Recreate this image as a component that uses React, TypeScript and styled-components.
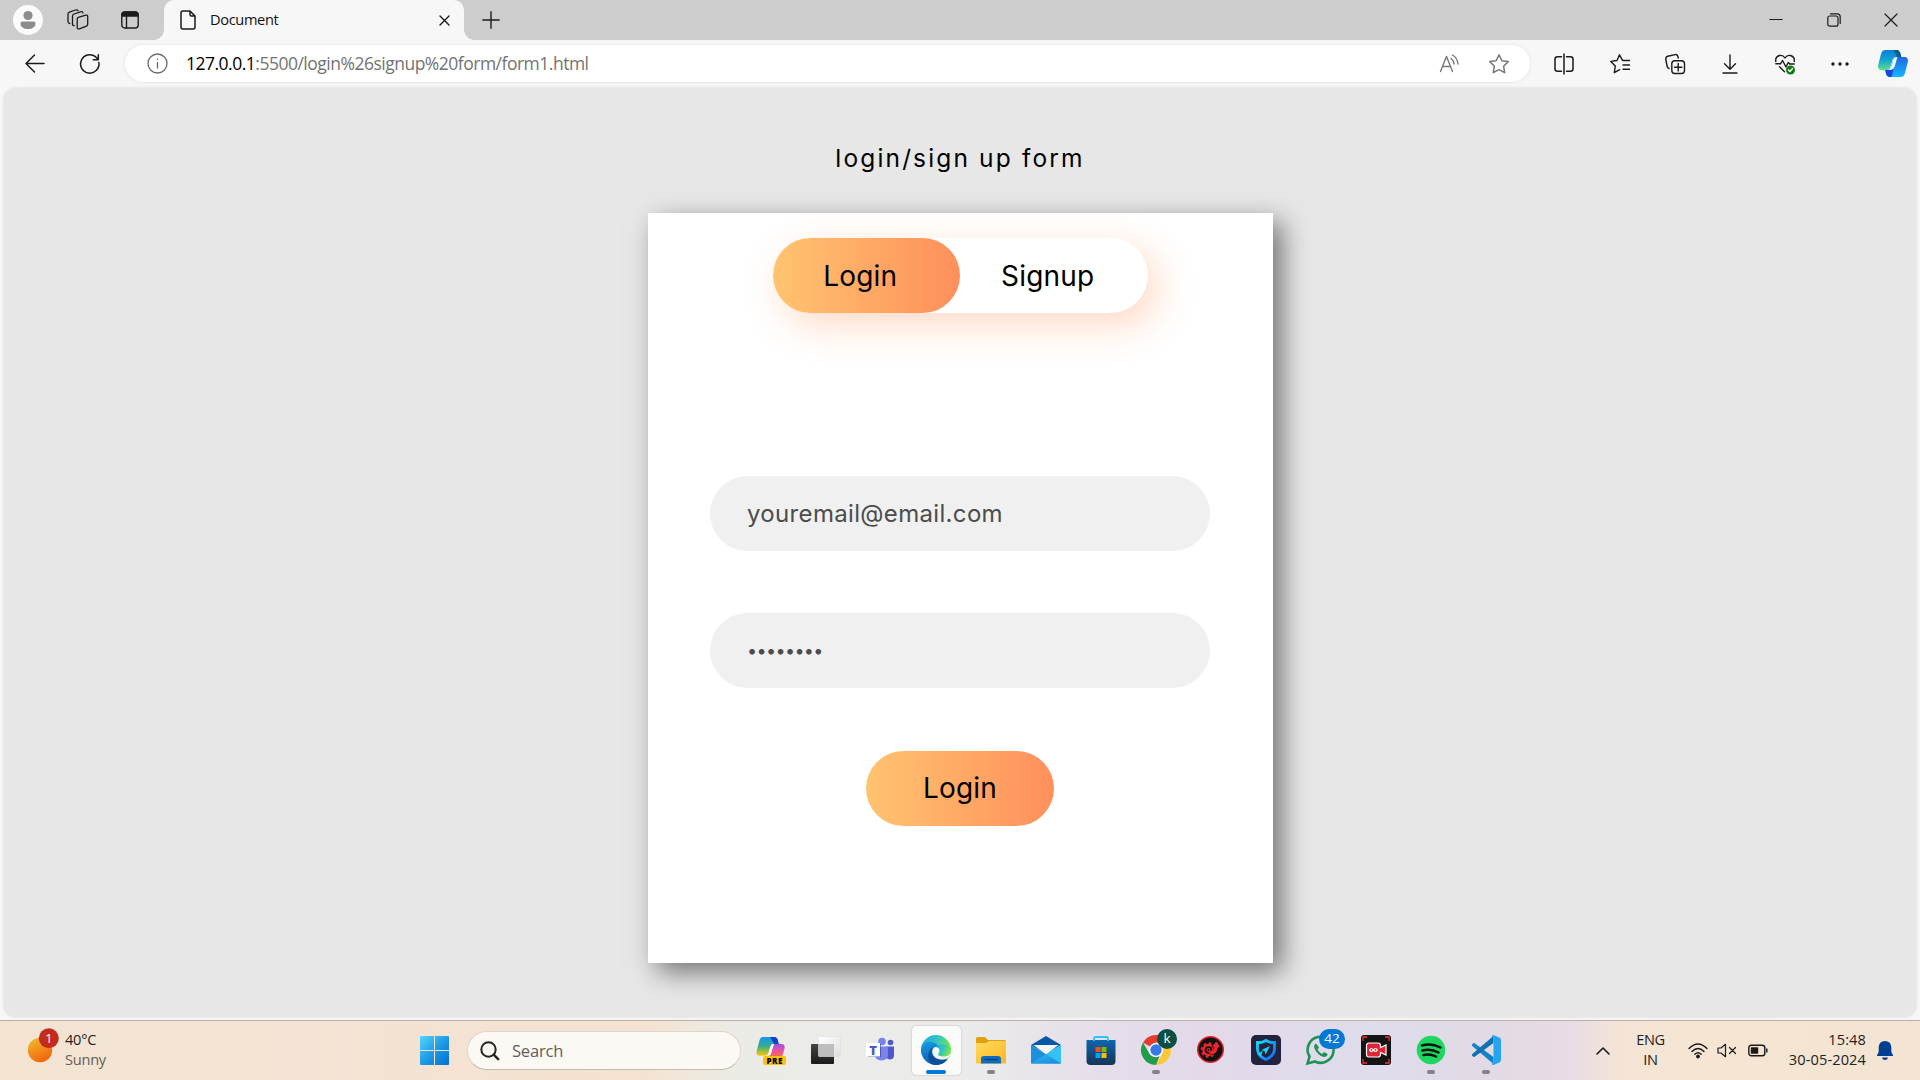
import React from 'react';
import styled, { createGlobalStyle } from 'styled-components';

const Global = createGlobalStyle`
  *, *::before, *::after { box-sizing: border-box; }
  html, body { margin: 0; padding: 0; background: #f7f7f7; }
  body { width: 1920px; height: 1080px; overflow: hidden; }
  button, input { font: inherit; border: 0; background: none; padding: 0; margin: 0; color: inherit; outline: none; }
`;

const ui = `'Open Sans', 'Noto Sans', sans-serif`;
const geo = `Inter, 'Open Sans', sans-serif`;

const Screen = styled.div`
  width: 1920px; height: 1080px; display: flex; flex-direction: column;
  background: #f7f7f7; font-family: ${ui}; color: #111; overflow: hidden;
`;
const TabStrip = styled.header`
  height: 40px; flex: none; display: flex; align-items: stretch; background: #cdcdcd;
`;
const Cell = styled.button<{ $w: number }>`
  width: ${p => p.$w}px; flex: none; display: flex; align-items: center; justify-content: center;
`;
const Spacer = styled.div`flex: 1;`;
const Avatar = styled.span`
  width: 30px; height: 30px; border-radius: 50%; background: #fbfbfb;
  display: flex; align-items: center; justify-content: center;
`;
const Tab = styled.div`
  position: relative; width: 300px; margin-left: 4px; background: #f7f7f7; border-radius: 10px 10px 0 0;
  display: flex; align-items: center; padding: 0 10px 0 16px;
  &::before, &::after { content: ''; position: absolute; bottom: 0; width: 10px; height: 10px; }
  &::before { left: -10px; background: radial-gradient(circle at 0 0, transparent 9.5px, #f7f7f7 10px); }
  &::after { right: -10px; background: radial-gradient(circle at 100% 0, transparent 9.5px, #f7f7f7 10px); }
`;
const TabTitle = styled.span`
  flex: 1; padding: 0 0 2px 14px; font-size: 14.6px; letter-spacing: -0.35px; line-height: 20px; color: #111;
`;
const Toolbar = styled.nav`
  height: 47.5px; flex: none; display: flex; align-items: center; padding-left: 8px;
`;
const Address = styled.div`
  width: 1405px; height: 37px; margin: 0 6px 0 7px; border-radius: 19px; background: #fff;
  box-shadow: 0 0 4px rgba(0,0,0,.09); display: flex; align-items: center; padding: 0 6px 0 22px;
`;
const Url = styled.span`
  flex: 1; padding: 0 0 1px 18px; font-size: 17.5px; letter-spacing: -0.5px; color: #737373; white-space: nowrap;
  b { font-weight: 400; color: #000; }
`;
const Viewport = styled.main`
  height: 929.5px; flex: none; margin: 0 4px 3px; border-radius: 12px; background: #e7e7e7;
  box-shadow: 0 0 3px rgba(0,0,0,.14); display: flex; flex-direction: column; align-items: center;
  font-family: ${geo}; color: #000;
`;
const Heading = styled.h1`
  margin: 0; height: 125.5px; padding-top: 52.5px; font-size: 24.5px; line-height: 36px; font-weight: 400;
  letter-spacing: 2.15px;
`;
const Card = styled.section`
  width: 625px; height: 750px; background: #fff; box-shadow: 9px 9px 25px rgba(0,0,0,.5);
  display: flex; flex-direction: column; align-items: center; padding-top: 25px;
`;
const Toggle = styled.div`
  width: 375px; height: 75px; border-radius: 37.5px; display: flex; background: #fff;
  box-shadow: 10px 12px 38px rgba(255, 130, 60, .3);
`;
const Pill = styled.button<{ $active?: boolean; $shift?: number }>`
  width: 187.5px; height: 75px; border-radius: 37.5px; font-size: 28px; letter-spacing: 0.2px;
  padding-right: ${p => p.$shift ?? 0}px; text-align: center;
  background: ${p => (p.$active ? 'linear-gradient(to right, #ffc46f, #ff8f5c)' : 'transparent')};
`;
const Form = styled.form`
  margin-top: 163px; display: flex; flex-direction: column; align-items: center; gap: 62.3px;
`;
const Field = styled.input<{ $dots?: boolean }>`
  width: 500px; height: 75px; border-radius: 37.5px; background: #f0f0f0; color: #4c4c4c;
  padding: 0 37px 1px; font-size: ${p => (p.$dots ? 18 : 24)}px; letter-spacing: ${p => (p.$dots ? -0.65 : 0.33)}px;
`;
const Taskbar = styled.footer`
  height: 60px; flex: none; display: flex; align-items: stretch; border-top: 1px solid #b9afa8;
  background: linear-gradient(90deg, #f3e4d2 0, #f3e3d4 300px, #f5e2d0 640px, #f0e7da 685px, #ebebe6 740px,
    #ebecea 960px, #e6e0ea 1080px, #e3d9e9 1200px, #dfdcec 1370px, #e2dae4 1500px, #e8dce6 1570px, #f4e4d6 1620px, #f5e5d2 1700px, #f3e4d3 1920px);
`;
const Weather = styled.div`
  width: 406.5px; display: flex; align-items: center; padding-left: 26px; gap: 3px;
`;
const Lines = styled.div<{ $align: string; $w: number; $track?: number }>`
  width: ${p => p.$w}px; display: flex; flex-direction: column; text-align: ${p => p.$align};
  font-size: 14.6px; line-height: 20px; letter-spacing: ${p => p.$track ?? -0.35}px; color: #222; white-space: nowrap;
  padding-bottom: 3px;
`;
const Muted = styled.span`color: #65605a;`;
const Search = styled.div`
  width: 274.5px; height: 39px; margin: 10px 2.5px 0 5px; border-radius: 20px; background: #fcf8f3;
  border: 1px solid #e0d5ca; border-bottom-color: #c3bbb4; display: flex; align-items: center; padding-left: 12.5px; gap: 12px;
  font-size: 16.5px; letter-spacing: -0.2px; color: #5f5e5c;
`;
const App55 = styled.button<{ $open?: boolean }>`
  position: relative; width: 55px; flex: none; display: flex; align-items: center; justify-content: center; padding-bottom: 1px;
  &::after {
    content: ''; display: ${p => (p.$open ? 'block' : 'none')}; position: absolute; bottom: 6px; left: 50%;
    width: 8px; height: 4px; margin-left: -4px; border-radius: 2px; background: #858085;
  }
`;
const ActiveTile = styled(App55)`
  width: 49px; margin: 5px 3px; border-radius: 5px; background: rgba(255,255,255,.72); box-shadow: 0 0 1px 0.5px rgba(0,0,0,.08);
  &::after { display: block; width: 20px; margin-left: -10px; bottom: 1px; background: #0078d4; }
`;
const Badge = styled.span<{ $bg: string; $w: number; $x: number }>`
  position: absolute; top: 8px; left: ${p => p.$x}px; min-width: ${p => p.$w}px; height: 20px; border-radius: 10px;
  background: ${p => p.$bg}; color: #fff; font-size: 13.5px; line-height: 19px; text-align: center;
`;
const Tray = styled.div`display: flex; align-items: center; margin-left: auto; padding-right: 16px;`;
const Svg = styled.svg`display: block; flex: none; overflow: visible;`;
const WeatherArt = styled.div`position: relative; width: 36px; height: 40px;`;

type IconProps = { w?: number; h?: number; color?: string; sw?: number; children: React.ReactNode };
const Line = ({ w = 22, h, color = '#1b1b1b', sw = 1.4, children }: IconProps) => (
  <Svg width={w} height={h ?? w} viewBox={`0 0 ${w} ${h ?? w}`} fill="none" stroke={color} strokeWidth={sw}
    strokeLinecap="round" strokeLinejoin="round">{children}</Svg>
);
const Art = ({ children }: { children: React.ReactNode }) => (
  <Svg width={30} height={30} viewBox="0 0 30 30">{children}</Svg>
);
const Grad = ({ id, a, b, c, x2 = '1', y2 = '1' }: { id: string; a: string; b: string; c?: string; x2?: string; y2?: string }) => (
  <linearGradient id={id} x1="0" y1="0" x2={x2} y2={y2}>
    <stop offset="0" stopColor={a} />{c && <stop offset=".5" stopColor={c} />}<stop offset="1" stopColor={b} />
  </linearGradient>
);

const CopilotTop = () => (
  <Svg width={30} height={27} viewBox="0 0 30 27">
    <defs>
      <Grad id="ct1" a="#0a7fe0" c="#12a5cf" b="#62df8e" x2="0" />
      <Grad id="ct2" a="#2266e0" b="#14b8ff" x2="0" />
    </defs>
    <path d="M7.5 0H18c2.5 0 3.6 1.3 4.3 3.6L23 7h-4c-3 0-4 1.5-4.8 4l-1.8 6c-.8 2.5-2 3.2-4.4 3.2H3.6C.6 20.200-.4 17.600.2 15L3 4C3.800 1.300 5 0 7.500 0Z" fill="url(#ct1)" />
    <path d="M15 0h4c2.300.1 3 1.800 3.700 4l.8 4h-4.500c-1.300-3-1.500-6-4-8Z" fill="#0d5f8f" />
    <path d="M22.500 27H12c-2.500 0-3.400-1.500-4-3.500L7.200 20c3 0 5-.6 6-3.600l2-6C16 8 17.500 7 20 7h6.400c3 0 4 2.300 3.400 5l-2.800 11c-.8 2.700-2 4-4.500 4Z" fill="url(#ct2)" />
    <path d="M7.200 20c3.300 0 5-.4 6-3.600L15 11c0 5 1 9-1.500 16H12c-2.500 0-3.400-1.500-4-3.500Z" fill="#1747dc" />
    <path d="m13.200 16.400 2-6C16 8 17.500 7 19.500 7l-2 6.500C16.400 18.500 14.500 20 11 20H7.200c3 0 5-.6 6-3.600Z" fill="#f4fbff" />
  </Svg>
);

export default function App() {
  return (
    <Screen>
      <Global />
      <TabStrip>
        <Cell $w={56}>
          <Avatar>
            <Svg width={16} height={20} viewBox="0 0 16 20" fill="#8c8c8c">
              <circle cx="8" cy="5.500" r="4.600" />
              <path d="M2.500 11.500h11a2 2 0 0 1 2 2c0 3.600-3.300 5.500-7.500 5.500S.5 17.100.5 13.500a2 2 0 0 1 2-2Z" />
            </Svg>
          </Avatar>
        </Cell>
        <Cell $w={43}>
          <Line w={22} sw={1.300}>
            <path d="m11.300 8.300 7.500-2.200q1.900-.4 1.900 1.500v7.600q0 1.300-1.300 1.900l-6.900 2.700q-2.300.7-2.300-1.500v-8q0-1.500 1.100-2Z" />
            <path d="M7.200 16.700q-1.700 0-1.700-1.700V7.200q0-1.600 1.500-2.200l6.500-2.200q2-.6 2.400 1" />
            <path d="M2.800 14.500Q1 14.300 1 12.500V5.200q0-1.500 1.500-2.100L8.500 1q1.800-.6 2.500.6" />
          </Line>
        </Cell>
        <Cell $w={61}>
          <Line w={18}>
            <rect x=".8" y="1" width="16.400" height="16" rx="3" />
            <path d="M1 5V4q0-3 3-3h10q3 0 3 3v1Z" fill="#1b1b1b" />
            <path d="M5.500 5v12" />
          </Line>
        </Cell>
        <Tab>
          <Line w={16} h={20} sw={1.500}>
            <path d="M3 1h7l5 5v11q0 2-2 2H3q-2 0-2-2V3q0-2 2-2ZM10 1v3.500Q10 6 11.500 6H15" />
          </Line>
          <TabTitle>Document</TabTitle>
          <Line w={20}><path d="m6 6 9 9M15 6l-9 9" /></Line>
        </Tab>
        <Cell $w={53}><Line w={18}><path d="M9 .8v16.400M.8 9h16.400" /></Line></Cell>
        <Spacer />
        <Cell $w={57.500}><Line w={14} sw={1.200}><path d="M1 6.500h12" /></Line></Cell>
        <Cell $w={57.500}>
          <Line w={14} sw={1.200}><rect x=".8" y="3" width="10.200" height="10.200" rx="2" /><path d="M3.500 .8h6.700q3 0 3 3v6.700" /></Line>
        </Cell>
        <Cell $w={57.500}><Line w={14} sw={1.200}><path d="m1 1 12 12M13 1 1 13" /></Line></Cell>
      </TabStrip>

      <Toolbar>
        <Cell $w={54}><Line w={20} sw={1.500}><path d="M19 9.500H1M9.500 1 1 9.500 9.500 18" /></Line></Cell>
        <Cell $w={56}>
          <Line w={20} sw={1.500}><path d="M18.900 8.500A9.200 9.200 0 1 1 15.500 2.700L18 5.300M18.300.8v5h-5" /></Line>
        </Cell>
        <Address>
          <Line w={21} color="#6b6b6b" sw={1.300}><circle cx="10.500" cy="10.500" r="9.500" /><path d="M10.500 9.500v5.500M10.500 6.200v.2" /></Line>
          <Url><b>127.0.0.1</b>:5500/login%26signup%20form/form1.html</Url>
          <Cell $w={50}>
            <Line w={20} color="#777"><path d="m1.500 17.500 6-15 6 15M3.500 12.500h8M12 4.500q3 2 3 5.500M13.500 1q5 3 5.500 9" /></Line>
          </Cell>
          <Cell $w={50}>
            <Line w={20} color="#777" sw={1.500}><path d="m10 .8 2.800 5.900 6.400.9-4.600 4.600 1.100 6.500-5.700-3-5.700 3 1.100-6.500L.8 7.600l6.400-.9Z" /></Line>
          </Cell>
        </Address>
        <Cell $w={56}>
          <Line w={20} sw={1.500}><path d="M10 0v20M7.500 2.800H3.500q-2.500 0-2.500 2.500v9.400q0 2.500 2.500 2.500h4M12.500 2.800h4q2.500 0 2.500 2.500v9.400q0 2.500-2.500 2.500h-4" /></Line>
        </Cell>
        <Cell $w={56}>
          <Line w={20} sw={1.400}><path d="M12.500 6.300 9.500.8 7 6.500l-6.200.9 4.500 4.600-1 6.700 5.400-3M13 6.500h6.500M13 11h6.500M13 15.300h6.500" /></Line>
        </Cell>
        <Cell $w={54}>
          <Line w={20}>
            <rect x="6.800" y="6.800" width="12.700" height="12.700" rx="3" /><path d="M13.200 9.500v7.400M9.500 13.200h7.400" />
            <path d="M4 14.500Q2.500 14 2.200 12.500L.8 5.500Q.5 3 2.800 2.200L10 .6q2.300-.3 2.800 1.600l.5 1.800" />
          </Line>
        </Cell>
        <Cell $w={55}><Line w={20}><path d="M10 1v14M4.500 9.800 10 15.200l5.500-5.400M3 19h14" /></Line></Cell>
        <Cell $w={55}>
          <Line w={20}>
            <path d="M.8 7.500Q0 3 4.500 1.500 8 .8 10 4q2-3.200 5.500-2.500Q20 3 19.200 7.500M.8 9.800h4.700L7.500 6.500l3.500 6.500 2.300-4.500 1.400 1.500h4.500M4.500 12.800l5 5" />
            <circle cx="15.500" cy="16" r="4.500" fill="#0f7b10" stroke="none" /><path d="m13.500 16 1.400 1.500 2.700-3" stroke="#fff" />
          </Line>
        </Cell>
        <Cell $w={55}>
          <Svg width={18} height={4} viewBox="0 0 18 4" fill="#1b1b1b"><circle cx="2" cy="2" r="1.700" /><circle cx="9" cy="2" r="1.700" /><circle cx="16" cy="2" r="1.700" /></Svg>
        </Cell>
        <Cell $w={51}><CopilotTop /></Cell>
      </Toolbar>

      <Viewport>
        <Heading>login/sign up form</Heading>
        <Card>
          <Toggle>
            <Pill $active $shift={12}>Login</Pill>
            <Pill $shift={12}>Signup</Pill>
          </Toggle>
          <Form onSubmit={e => e.preventDefault()}>
            <Field type="text" defaultValue="youremail@email.com" />
            <Field type="password" defaultValue="password" $dots />
            <Pill $active type="submit">Login</Pill>
          </Form>
        </Card>
      </Viewport>

      <Taskbar>
        <Weather>
          <WeatherArt>
            <Svg width={36} height={40} viewBox="0 0 36 40">
              <defs><Grad id="sun" a="#edc12f" b="#f4660d" x2=".5" /></defs>
              <circle cx="14" cy="19" r="12.200" fill="url(#sun)" />
              <circle cx="22.800" cy="7.300" r="10" fill="#c42b1c" />
              <text x="22.800" y="12.300" textAnchor="middle" fill="#fff" fontSize="13.500" fontFamily="Open Sans">1</text>
            </Svg>
          </WeatherArt>
          <Lines $align="left" $w={60} $track={-0.25}><span>40°C</span><Muted>Sunny</Muted></Lines>
        </Weather>
        <App55>
          <Art>
            <defs><Grad id="win" a="#55d5ff" c="#1e9ce6" b="#006fd0" /></defs>
            <path d="M2 1h13v14H1V2q0-1 1-1ZM16 1h13q1 0 1 1v13H16ZM1 16h14v14H2q-1 0-1-1ZM16 16h14v13q0 1-1 1H16Z" fill="url(#win)" />
          </Art>
        </App55>
        <Search>
          <Line w={20} color="#252525" sw={2}><circle cx="8.500" cy="8.500" r="7.200" /><path d="m13.700 13.700 4.500 4.500" strokeWidth="2.500" /></Line>
          <span>Search</span>
        </Search>
        <App55>
          <Art>
            <defs><Grad id="cp1" a="#1596f0" c="#37ad8a" b="#ffc800" x2="0" /><Grad id="cp2" a="#a34cf0" b="#ff6a4a" x2="0" c="#e4559b" /></defs>
            <path d="M7 2h11c2.500 0 3.400 1.500 4 4l.7 3H18c-2.500 0-3.500 2-4 4l-1.500 5c-.8 2-2 2.700-4 2.700H4c-3 0-4-2-3.300-4.700L3.300 6C4 3.400 5 2 7 2Z" fill="url(#cp1)" />
            <path d="M14 2h4c2.500 0 3.400 1.500 4 4l.7 3H18Z" fill="#1241c5" />
            <path d="M18 9h7.500c2.700 0 3.700 2 3 4.500L26 22H12c3-1 4-9 6-13Z" fill="url(#cp2)" />
            <path d="M18 9h-1c-1.500.3-2.500 2-3 4l-2 7h2.500Z" fill="#fff" />
            <rect x="7" y="21" width="23" height="9" rx="2" fill="#ffc10a" />
            <text x="18.600" y="28.500" textAnchor="middle" fontSize="8" fontWeight="800" fontFamily="Open Sans" letterSpacing=".5">PRE</text>
          </Art>
        </App55>
        <App55>
          <Art>
            <defs>
              <Grad id="tv" a="#444" b="#1b1b1b" x2="0" />
              <Grad id="tw" a="#ffffff" b="#dedede" />
            </defs>
            <rect x="0" y="9" width="23" height="20" rx="1" fill="url(#tv)" />
            <rect x="7.500" y="1.500" width="22" height="20" rx="1" fill="url(#tw)" stroke="#ddd" strokeWidth=".5" />
            <path d="M7.500 9H23v12.500H7.500Z" fill="#bdbdbd" />
          </Art>
        </App55>
        <App55>
          <Art>
            <circle cx="16" cy="6.500" r="3.800" fill="#7b83eb" /><circle cx="24.500" cy="7.500" r="2.800" fill="#5059c9" />
            <path d="M20 11.500h8v9q0 3.500-3.500 4-4.500 0-4.500-4.500Z" fill="#5059c9" />
            <path d="M9 11.500h13V20q0 5-6.500 5.500Q9 25 9 20Z" fill="#7b83eb" />
            <path d="M2 9h13v13H2Z" fill="#343a9c" opacity=".6" /><path d="M0 8h14v13.500H0Z" fill="#fff" />
            <text x="7" y="19.500" textAnchor="middle" fontSize="13" fontWeight="800" fill="#5059c9" fontFamily="Open Sans">T</text>
          </Art>
        </App55>
        <ActiveTile>
          <Art>
            <defs><Grad id="e1" a="#1ba9e4" c="#2fc3c7" b="#76e84a" y2=".35" /><Grad id="e2" a="#1a9fe5" b="#0f58ad" x2=".4" /></defs>
            <circle cx="15" cy="15" r="15" fill="url(#e1)" />
            <path d="M0 15C0 9 5 6 10 7c5 .7 8 3.500 8 7-1.500-2-4-2-5.500-.5C8 18 13 25 26.500 24.500A15 15 0 0 1 0 15Z" fill="url(#e2)" />
            <path d="M12 12.500c-4 6 1 12.500 8 12.500q4 0 6.500-.7A15 15 0 0 1 12 29.500C5 26 6.500 15 12 12.500Z" fill="#0c4f9c" />
            <path d="M30 15c0 4.500-3 6.500-7.500 6.500-3.500 0-6-1-5.500-2.500 2.200-2 1.800-7-2-7-2.500 0-4 2.500-3.500 5.500C12.500 24 20 26.500 27 23q2.500-2 3-8Z" fill="#f3f8f8" />
            <path d="M18 19c2-2.500 1-7-3-7 3-3 10-4 15 1 .3 6-3.500 8-7.500 8-3 0-5-.7-4.500-2Z" fill="url(#e1)" />
          </Art>
        </ActiveTile>
        <App55 $open>
          <Art>
            <defs><Grad id="fo" a="#ffda62" b="#fdb91c" /></defs>
            <path d="M0 3.500Q0 2 1.500 2H9l3 3h16.500Q30 5 30 6.500V12H0Z" fill="#e0a010" />
            <path d="M0 8h10l3-2h17v22.500H0Z" fill="url(#fo)" />
            <path d="M5 28.500V24q0-3 3-3h14q3 0 3 3v4.500Z" fill="#0f6cbd" /><path d="M8.500 24.500h13" stroke="#063f78" strokeWidth="1.200" />
          </Art>
        </App55>
        <App55>
          <Art>
            <defs><Grad id="ma" a="#31b7f2" b="#1688de" /></defs>
            <path d="M0 10 15 1l15 9-15 9Z" fill="#0759a5" />
            <path d="M2.500 10h25L15 19.500Z" fill="#f6f6f6" />
            <path d="M0 10v18.500h30Z" fill="#1c8fdd" /><path d="m30 10-15.500 9.500L30 28.500Z" fill="#34c1f5" /><path d="M0 28.500 15 19l15 9.500Z" fill="url(#ma)" />
          </Art>
        </App55>
        <App55>
          <Art>
            <defs><Grad id="st" a="#0d67ad" b="#173356" x2="0" /></defs>
            <path d="M.5 5h29v21q0 4-4 4h-21q-4 0-4-4Z" fill="url(#st)" />
            <path d="M8 6V3.500q0-1.500 1.500-1.500h11Q22 2 22 3.500V6" fill="none" stroke="#30c3f5" strokeWidth="1.800" />
            <path d="M9.500 12H14.500v5h-5Z" fill="#f25022" /><path d="M15.500 12h5v5h-5Z" fill="#7fba00" /><path d="M9.500 18h5v5h-5Z" fill="#00a4ef" /><path d="M15.500 18h5v5h-5Z" fill="#ffb900" />
          </Art>
        </App55>
        <App55 $open>
          <Art>
            <path d="M15 15 2 7.500a15 15 0 0 1 26 0Z" fill="#e33b2e" /><path d="M15 15V7.500h13A15 15 0 0 1 15 30l6.500-11.300Z" fill="#fcc934" />
            <path d="M2 7.500 8.500 18.700Q11 22 15 22l-.2 0 3.700-.7L15 30A15 15 0 0 1 2 7.500Z" fill="#229b4b" />
            <circle cx="15" cy="15" r="7.200" fill="#fff" /><circle cx="15" cy="15" r="5.700" fill="#3579e8" />
          </Art>
          <Badge $bg="#0b4f43" $w={20} $x={28.500}>k</Badge>
        </App55>
        <App55>
          <Art>
            <circle cx="14.500" cy="14.500" r="12.800" fill="#111" stroke="#e8232c" strokeWidth="1.500" />
            <circle cx="12.500" cy="15" r="5" fill="none" stroke="#f0262c" strokeWidth="2.400" />
            <circle cx="12.500" cy="15" r="6.900" fill="none" stroke="#f0262c" strokeWidth="1.800" strokeDasharray="2.800 2.620" />
            <path d="M12 16.500q5.500-.5 6-4.500h-2.500l5-6 4 6.500H22q-.5 7-7.500 7.500Z" fill="#f0262c" stroke="#111" strokeWidth=".6" />
            <circle cx="12.500" cy="15" r="1.500" fill="none" stroke="#f0262c" strokeWidth="1.200" />
          </Art>
        </App55>
        <App55>
          <Art>
            <defs><Grad id="sh" a="#12e2ff" b="#1464ff" /></defs>
            <rect width="30" height="30" rx="5" fill="#21243c" />
            <path d="M6.500 7.500Q11 8 15 5.500 19 8 23.500 7.500V15q-1 6.500-8.500 9.500Q7.500 21.500 6.500 15Z" fill="none" stroke="url(#sh)" strokeWidth="2.800" />
            <path d="m19 11-8.500 4 3 1 1 3.500Z" fill="#12d8ff" /><path d="m7 19 5-3.500-2.500 6Z" fill="#12e2ff" />
          </Art>
        </App55>
        <App55>
          <Art>
            <path d="m1.500 28.500 2-7A13 13 0 1 1 9 26.500Z" fill="none" stroke="#1f9256" strokeWidth="2.600" />
            <path d="M10 8.500c-1.500.5-2.500 2.500-1.500 5 2 4.500 5 7.500 9.500 8.500 2 0 3.500-1 3.700-3l-3.700-2-2 2q-3-1.500-4.500-4.500l1.500-2Z" fill="#1f9256" />
          </Art>
          <Badge $bg="#0078d4" $w={26} $x={25.500}>42</Badge>
        </App55>
        <App55>
          <Art>
            <rect width="30" height="30" rx="3" fill="#141414" />
            <path d="M2 6V2h4M24 2h4v4M2 24v4h4M24 28h4v-4" fill="none" stroke="#e33" strokeWidth="1.300" />
            <path d="M8 8h9q2.500 0 2.500 2.500v2l5.500-2.500v10l-5.500-2.500v2q0 2.500-2.500 2.500H8q-2.500 0-2.500-2.500v-9Q5.500 8 8 8Z" fill="#e02436" stroke="#fff" strokeWidth="1.200" />
            <path d="M12.500 15q-2.500-3-3.800 0 1.300 3 3.800 0 2.500-3 3.800 0-1.300 3-3.800 0Z" fill="none" stroke="#fff" strokeWidth="1.200" />
          </Art>
        </App55>
        <App55 $open>
          <Art>
            <circle cx="15" cy="15" r="14.300" fill="#1ed760" />
            <path d="M6 10.500q9.500-2.500 18.500 2M6.500 15.500q8.500-2 16 2M7.500 20q7-1.500 12.500 1.500" fill="none" stroke="#0a140d" strokeWidth="2.500" strokeLinecap="round" />
          </Art>
        </App55>
        <App55 $open>
          <Art>
            <path d="m1 9.500 2-1.800L22.500 22v7L1 10.800Z" fill="#1482c8" /><path d="m1 20.500 2 1.800L22.500 8V1L1 19.200Z" fill="#0f70b3" />
            <path d="m22.500 0 6.200 2.800Q30 3.500 30 5v20q0 1.500-1.300 2.200L22.500 30Q21 30 20.500 28.500q2 .5 2-1.500V3q0-2-2-1.500Q21 0 22.500 0Z" fill="#25a4f2" />
          </Art>
        </App55>
        <Tray>
          <Cell $w={40}><Line w={14} h={8} sw={1.600}><path d="m1 7 6-6 6 6" /></Line></Cell>
          <Lines $align="center" $w={55}><span>ENG</span><span>IN</span></Lines>
          <Cell $w={39}>
            <Line w={20} h={16}><path d="M1 5.500q9-9 18 0M4 8.500q6-6 12 0M6.800 11.300q3.200-3.200 6.400 0" /><circle cx="10" cy="13.500" r="1.200" fill="#1b1b1b" /></Line>
          </Cell>
          <Cell $w={20}>
            <Line w={20} h={14} sw={1.200}><path d="M1 4h3L8.500.3v12.400L4 9H1ZM12.500 3.500l6 6M18.500 3.500l-6 6" /></Line>
          </Cell>
          <Cell $w={41}>
            <Line w={20} h={12}><rect x=".8" y=".3" width="16" height="10.500" rx="2.500" /><path d="M3.500 3h6v5h-6ZM18.800 4v3" fill="#1b1b1b" /></Line>
          </Cell>
          <Lines $align="right" $w={88} $track={0.1}><span>15:48</span><span>30-05-2024</span></Lines>
          <Cell $w={38}>
            <Svg width={16} height={19} viewBox="0 0 16 19" fill="#003e92"><path d="M8 0q5.800 0 6.300 6v5L16 14.200v.8H0v-.8L1.700 11V6Q2.200 0 8 0ZM5 16.500h6q-.5 2.500-3 2.500t-3-2.500Z" /></Svg>
          </Cell>
        </Tray>
      </Taskbar>
    </Screen>
  );
}
